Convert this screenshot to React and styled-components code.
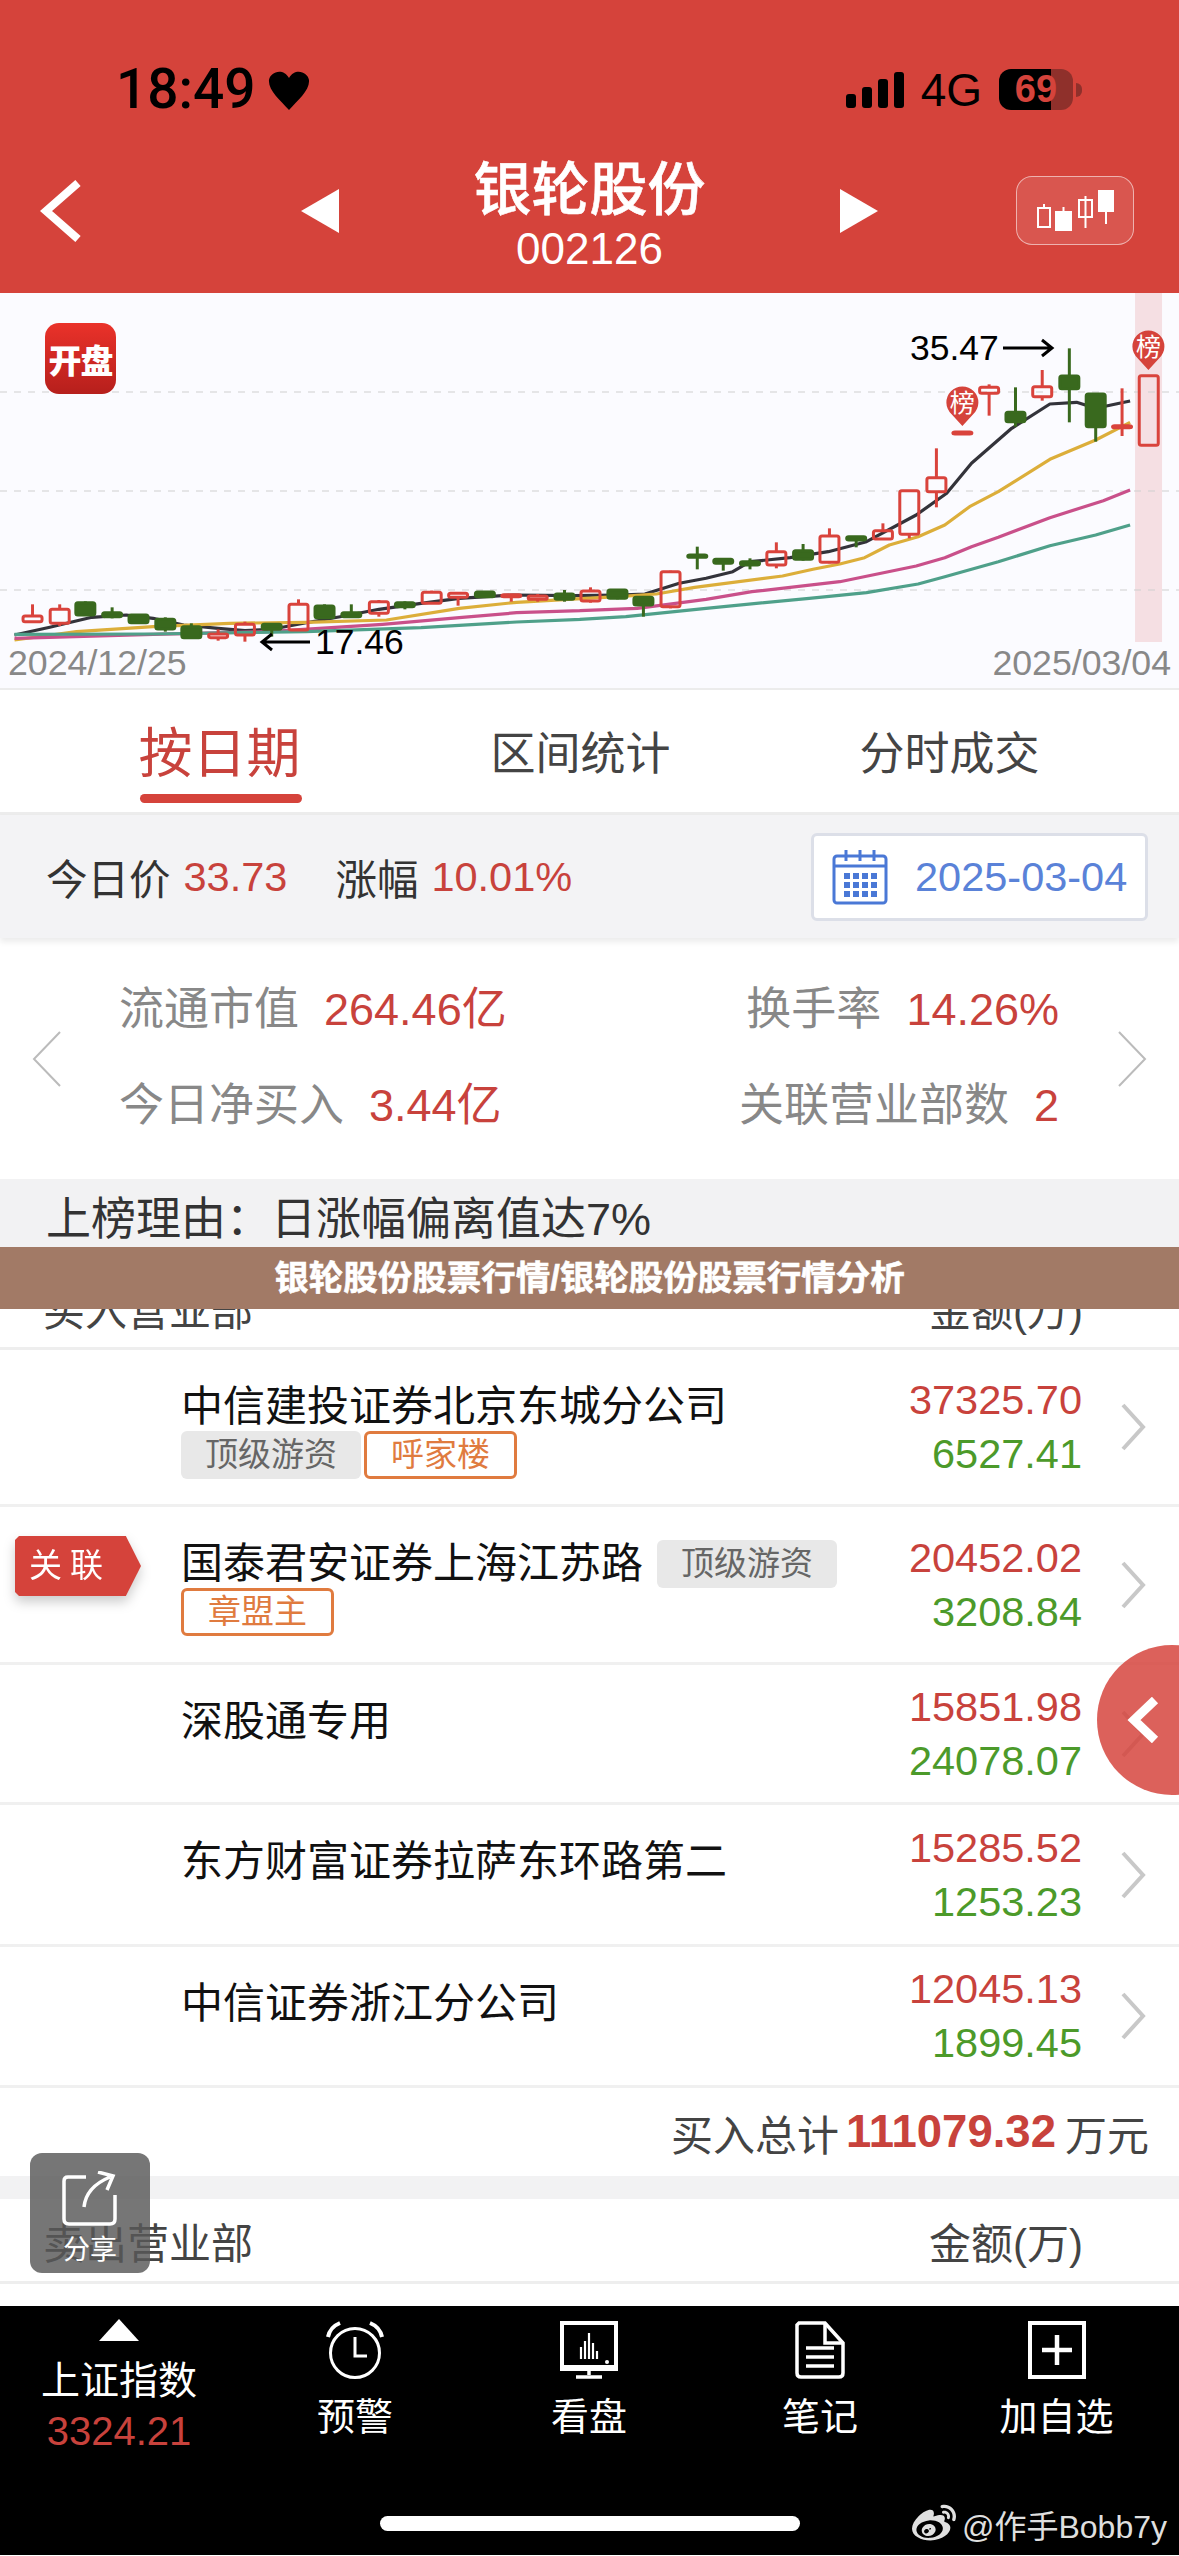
import React from 'react';
import styled, { createGlobalStyle } from 'styled-components';
import { FaWeibo } from 'react-icons/fa';

const RED = '#d5433b';
const NUM_RED = '#c8423c';
const NUM_GREEN = '#4c9a2a';
const CANDLE_RED = '#d9433c';
const CANDLE_GREEN = '#39691e';

const GlobalStyle = createGlobalStyle`
  * { box-sizing: border-box; }
  html, body { margin: 0; padding: 0; background: #fff; }
  body { font-family: "Liberation Sans", "Noto Sans CJK SC", sans-serif; }
`;

const Page = styled.div`
  position: relative;
  display: flex;
  flex-direction: column;
  width: 1179px;
  height: 2556px;
  overflow: hidden;
  background: #fff;
  color: #333;
`;

/* header */
const Header = styled.header`
  display: flex;
  flex-direction: column;
  height: 293px;
  flex: none;
  background: ${RED};
`;

const StatusBar = styled.div`
  display: flex;
  align-items: center;
  height: 55px;
  margin-top: 62px;
  padding: 0 106px 0 116px;
  color: #000;
`;

const Clock = styled.span`
  font-family: Roboto, "Liberation Sans", sans-serif;
  font-weight: 500;
  font-size: 55px;
  line-height: 55px;
`;

const StatusRight = styled.div`
  display: flex;
  align-items: center;
  margin-left: auto;
`;

const Network = styled.span`
  margin: 0 17px 0 17px;
  font-size: 46px;
  line-height: 50px;
`;

const Battery = styled.div`
  display: flex;
  align-items: center;
  justify-content: center;
  width: 74px;
  height: 41px;
  border-radius: 12px;
  background: linear-gradient(90deg, #000 70%, #8f302b 70%);
  color: ${RED};
  font-size: 38px;
  font-weight: 700;
`;

const BatteryTip = styled.div`
  width: 6px;
  height: 14px;
  margin-left: 3px;
  margin-right: -9px;
  border-radius: 0 6px 6px 0;
  background: #8f302b;
`;

const NavRow = styled.div`
  display: grid;
  grid-template-columns: 1fr 578px 1fr;
  align-items: center;
  margin-top: 42px;
  height: 113px;
`;

const BackLink = styled.div`
  padding-left: 40px;
  margin-bottom: 10px;
  line-height: 0;
`;

const StockSwitch = styled.div`
  display: flex;
  align-items: center;
  justify-content: space-between;
`;

const SwitchArrow = styled.svg`
  margin-bottom: 10px;
`;

const StockTitle = styled.div`
  text-align: center;
  color: #fff;
`;

const StockName = styled.div`
  font-size: 58px;
  line-height: 62px;
  font-weight: 500;
  -webkit-text-stroke: 0.6px #fff;
`;

const StockCode = styled.div`
  margin-top: 5px;
  font-size: 44px;
  line-height: 46px;
`;

const KlineButtonWrap = styled.div`
  display: flex;
  justify-content: flex-end;
  padding-right: 45px;
  margin-bottom: 10px;
`;

const KlineButton = styled.div`
  display: flex;
  align-items: center;
  justify-content: center;
  width: 118px;
  height: 69px;
  border: 1.5px solid rgba(255, 255, 255, 0.55);
  border-radius: 16px;
  background: rgba(255, 255, 255, 0.1);
`;

/* chart */
const ChartPanel = styled.section`
  position: relative;
  flex: none;
  height: 397px;
  background: #fbfbff;
  border-bottom: 2px solid #ececec;
`;

const ChartSvg = styled.svg`
  display: block;
  overflow: visible;
`;

const AppLogo = styled.div`
  position: absolute;
  left: 45px;
  top: 30px;
  width: 71px;
  height: 71px;
  display: flex;
  align-items: center;
  justify-content: center;
  border-radius: 14px;
  background: linear-gradient(180deg, #ea322a, #b61f1c);
  color: #fff;
  font-size: 33px;
  font-weight: 900;
  letter-spacing: -1px;
`;

const DateRow = styled.div`
  display: flex;
  justify-content: space-between;
  padding: 0 8px;
  color: #888;
  font-size: 35.7px;
  line-height: 42px;
`;

/* tabs */
const Tabs = styled.nav`
  display: grid;
  grid-template-columns: 365px 357px 381px;
  flex: none;
  height: 125px;
  padding-left: 37px;
  border-bottom: 3px solid #ececec;
`;

const Tab = styled.div`
  position: relative;
  display: flex;
  align-items: center;
  justify-content: center;
  padding-bottom: ${p => (p.$active ? '4px' : '2px')};
  color: ${p => (p.$active ? NUM_RED : '#444')};
  font-size: ${p => (p.$active ? '54px' : '45px')};
`;

const TabLine = styled.span`
  position: absolute;
  left: 50%;
  bottom: 9px;
  width: 162px;
  height: 9px;
  margin-left: -80px;
  border-radius: 5px;
  background: ${RED};
`;

/* today summary */
const Summary = styled.section`
  display: flex;
  align-items: center;
  flex: none;
  height: 123px;
  padding: 0 31px 0 46px;
  background: #f3f3f5;
  box-shadow: 0 4px 6px rgba(0, 0, 0, 0.08);
  font-size: 41.5px;
  color: #333;
`;

const SummaryValue = styled.span`
  margin-left: 13px;
  margin-right: 48px;
  color: ${NUM_RED};
`;

const DateBox = styled.div`
  display: flex;
  align-items: center;
  gap: 27px;
  width: 337px;
  height: 88px;
  margin-left: auto;
  padding-left: 18px;
  border: 3px solid #dcdfe8;
  border-radius: 6px;
  background: #fff;
  color: #5a82d8;
`;

/* metrics */
const Metrics = styled.section`
  display: grid;
  grid-template-columns: 30px 1fr 30px;
  align-items: center;
  flex: none;
  height: 241px;
  padding: 0 32px;
`;

const MetricsBody = styled.div`
  display: flex;
  flex-direction: column;
  gap: 36px;
  padding: 0 58px 0 57px;
  margin-top: -2px;
`;

const MetricsRow = styled.div`
  display: flex;
  justify-content: space-between;
  font-size: 45px;
  line-height: 60px;
  color: #888;
`;

const MetricValue = styled.span`
  margin-left: 25px;
  color: ${NUM_RED};
`;

/* list */
const Reason = styled.div`
  flex: none;
  height: 84px;
  padding: 14px 0 0 46px;
  background: #f2f2f3;
  color: #333;
  font-size: 45px;
  line-height: 54px;
`;

const ListHead = styled.div`
  display: flex;
  justify-content: space-between;
  align-items: center;
  flex: none;
  height: ${p => (p.$raised ? '87px' : '85px')};
  padding: ${p => (p.$raised ? '4px' : '0')} 96px 0 43px;
  border-bottom: 3px solid #eeeeee;
  color: #444;
  font-size: 42px;
`;

const Row = styled.div`
  position: relative;
  display: flex;
  flex: none;
  height: ${p => p.$h}px;
  padding: 33px 33px 0 181px;
  border-bottom: 3px solid #f0f0f0;
`;

const NameCol = styled.div`
  display: flex;
  flex-wrap: wrap;
  align-items: center;
  align-content: flex-start;
  width: 710px;
`;

const Name = styled.span`
  margin-right: 14px;
  color: #111;
  font-size: 42px;
  line-height: 48px;
`;

const Tag = styled.span`
  height: 48px;
  margin-right: 3px;
  padding: 0 24px;
  border: ${p => (p.$orange ? '3px solid #e07b3f' : 'none')};
  border-radius: 6px;
  background: ${p => (p.$orange ? '#fff' : '#e8e8e8')};
  color: ${p => (p.$orange ? '#e07b3f' : '#666')};
  font-size: 33px;
  line-height: ${p => (p.$orange ? '42px' : '48px')};
`;

const Amounts = styled.div`
  display: flex;
  flex-direction: column;
  align-self: center;
  margin: -33px 38px 0 auto;
  text-align: right;
  font-size: 41.5px;
  line-height: 54px;
`;

const Amount = styled.span`
  color: ${p => (p.$down ? NUM_GREEN : NUM_RED)};
`;

const RowArrow = styled.svg`
  align-self: center;
  flex: none;
  margin-top: -33px;
`;

const BadgeShadow = styled.div`
  position: absolute;
  left: 15px;
  top: 29px;
  filter: drop-shadow(0 6px 6px rgba(0, 0, 0, 0.2));
`;

const Badge = styled.div`
  width: 126px;
  height: 60px;
  padding-left: 14px;
  background: ${RED};
  clip-path: polygon(0 4px, 4px 0, 88% 0, 100% 50%, 88% 100%, 4px 100%, 0 calc(100% - 4px));
  color: #fff;
  font-size: 33px;
  line-height: 60px;
  letter-spacing: 8px;
`;

const Total = styled.div`
  display: flex;
  align-items: center;
  justify-content: flex-end;
  flex: none;
  height: 88px;
  padding-right: 30px;
  color: #444;
  font-size: 42px;
`;

const TotalValue = styled.span`
  margin: 0 9px 0 7px;
  color: ${NUM_RED};
  font-weight: 700;
  font-size: 45.5px;
`;

const GapBand = styled.div`
  flex: none;
  height: 23px;
  background: #f2f2f3;
`;

/* floating */
const Banner = styled.div`
  position: absolute;
  left: 0;
  right: 0;
  top: 1247px;
  height: 62px;
  background: #a27a66;
  color: #fff;
  text-align: center;
  font-size: 34.5px;
  font-weight: 700;
  line-height: 62px;
  -webkit-text-stroke: 0.6px #fff;
`;

const SideToggle = styled.div`
  position: absolute;
  left: 1097px;
  top: 1645px;
  display: flex;
  align-items: center;
  width: 150px;
  height: 150px;
  padding-left: 30px;
  border-radius: 50%;
  background: rgba(213, 67, 59, 0.84);
`;

const ShareButton = styled.div`
  position: absolute;
  left: 30px;
  top: 2153px;
  display: flex;
  flex-direction: column;
  align-items: center;
  gap: 8px;
  width: 120px;
  height: 120px;
  padding-top: 18px;
  border-radius: 12px;
  background: rgba(88, 88, 88, 0.82);
  color: #fff;
  font-size: 27px;
  line-height: 30px;
`;

/* bottom bar */
const BottomBar = styled.footer`
  display: flex;
  flex-direction: column;
  flex: none;
  margin-top: 22px;
  height: 249px;
  background: #000;
  color: #fff;
`;

const BarGrid = styled.div`
  display: grid;
  grid-template-columns: 238px 234px 234px 228px 245px;
  padding-top: 13px;
`;

const BarItem = styled.div`
  display: flex;
  flex-direction: column;
  align-items: center;
  font-size: 38px;
  line-height: 44px;
`;

const BarIcon = styled.svg`
  margin-top: 2px;
  margin-bottom: 16px;
`;

const IndexName = styled.span`
  margin-top: 18px;
  font-size: 39px;
`;

const IndexValue = styled.span`
  margin-top: 6px;
  color: ${NUM_RED};
  font-size: 40px;
`;

const HomeBar = styled.div`
  align-self: center;
  width: 420px;
  height: 15px;
  margin-top: auto;
  margin-bottom: 24px;
  border-radius: 8px;
  background: #fff;
`;

const Watermark = styled.div`
  position: absolute;
  right: 12px;
  bottom: 9px;
  display: flex;
  align-items: center;
  gap: 6px;
  color: rgba(255, 255, 255, 0.88);
  font-size: 32px;
`;

/* chart data, measured in page pixels once converted */
const lx = px => px * 0.3827;
const rx = px => 580 + px * 0.382;
const py = v => 290 + v / 3;

const R = CANDLE_RED;
const G = CANDLE_GREEN;

const candles = [
  ...[
    [85, 978, 995, 943, 995, R], [156, 958, 1000, 943, 1008, R], [223, 938, 975, 934, 978, G],
    [293, 968, 980, 952, 985, G], [362, 975, 998, 973, 1000, G], [432, 988, 1017, 982, 1025, G],
    [500, 1010, 1043, 1000, 1045, G], [570, 1032, 1043, 1018, 1052, R], [640, 1003, 1035, 995, 1055, R],
    [710, 1003, 1018, 1000, 1040, G], [780, 943, 1020, 928, 1022, R], [848, 948, 983, 943, 985, G],
    [918, 968, 980, 943, 983, G], [990, 935, 970, 930, 980, R], [1058, 938, 950, 934, 958, G],
    [1128, 907, 940, 902, 942, R], [1197, 910, 922, 908, 947, R], [1267, 906, 920, 903, 922, G],
    [1336, 914, 920, 912, 935, R], [1405, 918, 928, 912, 935, R], [1475, 912, 928, 900, 935, G],
    [1543, 903, 933, 892, 938, R],
  ].map(c => [lx(c[0]), ...c.slice(1)]),
  ...[
    [98, 900, 925, 898, 928, G], [166, 922, 945, 920, 980, G], [237, 845, 950, 842, 955, R],
    [307, 795, 802, 770, 838, G], [375, 808, 820, 806, 842, G], [445, 815, 825, 805, 838, G],
    [514, 785, 825, 757, 835, R], [584, 782, 808, 762, 812, G], [653, 738, 817, 715, 820, R],
    [723, 740, 750, 738, 772, G], [793, 722, 747, 700, 750, R], [862, 602, 733, 600, 745, R],
    [933, 563, 605, 475, 652, R], [1001, 426, 432, 426, 432, R], [1071, 292, 310, 283, 377, R],
    [1140, 367, 395, 292, 410, G], [1210, 290, 320, 240, 332, R], [1281, 258, 296, 175, 397, G],
    [1350, 312, 410, 312, 455, G], [1419, 407, 413, 295, 438, R],
  ].map(c => [rx(c[0]), ...c.slice(1)]),
];

const toPath = (left, right) =>
  'M' +
  [
    ...left.map(([x, y]) => `${lx(x).toFixed(1)} ${py(y).toFixed(1)}`),
    ...right.map(([x, y]) => `${rx(x).toFixed(1)} ${py(y).toFixed(1)}`),
  ].join(' L');

const maLines = [
  {
    color: '#33333a',
    d: toPath(
      [[38, 1035], [130, 1012], [240, 982], [330, 975], [400, 985], [480, 1005], [570, 1015], [640, 1022], [710, 1018], [800, 998], [900, 978], [990, 958], [1100, 940], [1200, 925], [1340, 915], [1500, 917]],
      [[100, 915], [170, 912], [260, 880], [330, 865], [400, 845], [445, 815], [550, 803], [650, 785], [750, 755], [880, 675], [960, 610], [1025, 520], [1130, 415], [1230, 342], [1300, 337], [1350, 355], [1440, 333]]
    ),
  },
  {
    color: '#dcae3a',
    d: toPath(
      [[38, 1050], [200, 1025], [400, 1010], [600, 1000], [800, 997], [1010, 990], [1200, 955], [1350, 937], [1530, 925]],
      [[100, 920], [200, 912], [300, 892], [530, 858], [610, 838], [680, 822], [745, 803], [810, 765], [885, 740], [955, 705], [1020, 650], [1095, 605], [1230, 508], [1350, 450], [1440, 397]]
    ),
  },
  {
    color: '#c9508a',
    d: toPath(
      [[38, 1045], [400, 1033], [700, 1025], [1000, 1003], [1200, 983], [1350, 968], [1518, 962]],
      [[0, 962], [150, 955], [330, 928], [450, 905], [680, 875], [880, 828], [955, 803], [1025, 770], [1095, 742], [1230, 683], [1370, 632], [1440, 600]]
    ),
  },
  {
    color: '#4fa08a',
    d: toPath(
      [[38, 1033], [400, 1032], [800, 1025], [1100, 1013], [1350, 996], [1518, 988]],
      [[0, 988], [120, 980], [330, 955], [600, 925], [750, 908], [885, 882], [955, 860], [1095, 815], [1230, 767], [1350, 735], [1440, 705]]
    ),
  },
];

const Pin = ({ x, y }) => (
  <g>
    <path d={`M${x} ${y} L${x - 11} ${y - 12} A16 16 0 1 1 ${x + 11} ${y - 12} Z`} fill={RED} />
    <text x={x} y={y - 14} textAnchor="middle" fontSize="25" fill="#fff">榜</text>
  </g>
);

const Chart = () => (
  <ChartSvg width="1179" height="349" viewBox="0 293 1179 349">
    <rect x={rx(1453)} y="293" width="27" height="349" fill="#f5dfe3" />
    {[392, 491, 590].map(y => (
      <line key={y} x1="0" x2="1179" y1={y} y2={y} stroke="#cfcfcf" strokeWidth="1" strokeDasharray="7 7" />
    ))}
    {maLines.map(l => (
      <path key={l.color} d={l.d} fill="none" stroke={l.color} strokeWidth="3.2" strokeLinejoin="round" />
    ))}
    {candles.map(([x, bt, bb, wt, wb, color]) => (
      <g key={x} stroke={color}>
        <line x1={x} x2={x} y1={py(wt)} y2={py(bt)} strokeWidth="3" />
        <line x1={x} x2={x} y1={py(bb)} y2={py(wb)} strokeWidth="3" />
        <rect
          x={x - 9.5}
          y={py(bt)}
          width="19"
          height={py(bb) - py(bt)}
          rx="2"
          strokeWidth="3"
          fill={color === G ? G : 'none'}
        />
      </g>
    ))}
    <rect x={rx(1464)} y={py(257)} width="19" height={py(466) - py(257)} rx="2" fill="none" stroke={R} strokeWidth="3" />
    <Pin x={rx(1001)} y={py(408)} />
    <Pin x={rx(1488)} y={py(240)} />
    <text x="910" y="360" fontSize="35.5" fontFamily="Liberation Sans" fill="#000">35.47</text>
    <path d="M1003 348 H1051 M1042 340 L1052 348 L1042 356" fill="none" stroke="#000" strokeWidth="3" />
    <text x="315" y="654" fontSize="35.5" fontFamily="Liberation Sans" fill="#000">17.46</text>
    <path d="M310 642 H262 M272 634 L262 642 L272 650" fill="none" stroke="#000" strokeWidth="3" />
  </ChartSvg>
);

const SignalBars = () => (
  <svg width="58" height="36" viewBox="0 0 58 36" fill="#000">
    <rect x="0" y="22" width="10" height="14" rx="3" />
    <rect x="16" y="15" width="10" height="21" rx="3" />
    <rect x="32" y="7" width="10" height="29" rx="3" />
    <rect x="48" y="0" width="10" height="36" rx="3" />
  </svg>
);

const Heart = () => (
  <svg width="42" height="40" viewBox="0 0 42 40" style={{ marginLeft: 12 }}>
    <path d="M21 40 C12 30 0 20 1 10 C2 2 15 -3 21 8 C27 -3 40 2 41 10 C42 20 30 30 21 40 Z" fill="#000" />
  </svg>
);

const KlineIcon = () => (
  <svg width="80" height="42" viewBox="0 0 80 42" fill="none" stroke="#fff" strokeWidth="2">
    <rect x="3" y="18" width="12" height="19" />
    <line x1="9" y1="14" x2="9" y2="18" />
    <rect x="21" y="22" width="15" height="18" fill="#fff" />
    <line x1="28.5" y1="17" x2="28.5" y2="22" />
    <rect x="44" y="10" width="13" height="17" />
    <line x1="50.5" y1="6" x2="50.5" y2="38" />
    <rect x="64" y="1" width="14" height="20" fill="#fff" />
    <line x1="71" y1="21" x2="71" y2="34" />
  </svg>
);

const CalendarIcon = () => (
  <svg width="56" height="56" viewBox="0 0 56 56" fill="none" stroke="#4a78d6" strokeWidth="3">
    <rect x="2" y="7" width="52" height="47" rx="3" />
    <line x1="2" y1="17" x2="54" y2="17" />
    {[14, 28, 42].map(x => <line key={x} x1={x} x2={x} y1="1" y2="12" />)}
    <g fill="#4a78d6" stroke="none">
      {[16, 25, 34, 43].map(x =>
        [24, 33, 42].map(y => <rect key={`${x}${y}`} x={x - 4} y={y} width="6" height="6" />)
      )}
    </g>
  </svg>
);

const Chevron = ({ flip }) => (
  <svg width="30" height="56" viewBox="0 0 30 56" fill="none" stroke="#bbb" strokeWidth="2">
    <path d={flip ? 'M2 1 L28 28 L2 55' : 'M28 1 L2 28 L28 55'} />
  </svg>
);

const ShareIcon = () => (
  <svg width="56" height="56" viewBox="0 0 56 56" fill="none" stroke="#fff" strokeWidth="3.5">
    <path d="M24 6 H6 Q2 6 2 10 V48 Q2 53 7 53 H48 Q53 53 53 48 V24" />
    <path d="M22 36 Q24 16 48 6 M36 1 L51 5 L45 19" />
  </svg>
);

const AlarmIcon = () => (
  <BarIcon width="58" height="58" viewBox="0 0 58 58" fill="none" stroke="#fff" strokeWidth="3">
    <circle cx="29" cy="32" r="24.5" />
    <path d="M29 16 V35 H41" />
    <path d="M2 16 Q4 6 14 2 M56 16 Q54 6 44 2" strokeWidth="4" />
  </BarIcon>
);

const MonitorIcon = () => (
  <BarIcon width="58" height="58" viewBox="0 0 58 58" fill="none">
    <rect x="2" y="2" width="54" height="46" fill="#000" stroke="#fff" strokeWidth="4" />
    <rect x="0" y="44" width="58" height="5" fill="#fff" />
    <path d="M29 49 V54 M16 56 H42" stroke="#fff" strokeWidth="3.5" />
    <g stroke="#fff" strokeWidth="2.2">
      <path d="M21 38 V26 M25 38 V20 M29 38 V12 M33 38 V22 M37 38 V30" />
    </g>
    <circle cx="47" cy="41" r="2" fill="#fff" />
  </BarIcon>
);

const DocIcon = () => (
  <BarIcon width="50" height="58" viewBox="0 0 50 58" fill="none" stroke="#fff" strokeWidth="3.5">
    <path d="M4 2 H30 L48 22 V52 Q48 56 44 56 H6 Q2 56 2 52 V4 Z" />
    <path d="M30 2 V22 H48" />
    <path d="M11 27 H39 M11 36 H39 M11 45 H39" />
  </BarIcon>
);

const PlusIcon = () => (
  <BarIcon width="58" height="58" viewBox="0 0 58 58" fill="none" stroke="#fff">
    <rect x="2" y="2" width="54" height="54" strokeWidth="4" />
    <path d="M29 14 V44 M14 29 H44" strokeWidth="4.5" />
  </BarIcon>
);

const rows = [
  { h: 157, name: '中信建投证券北京东城分公司', tags: [['顶级游资'], ['呼家楼', true]], buy: '37325.70', sell: '6527.41' },
  { h: 158, name: '国泰君安证券上海江苏路', tags: [['顶级游资'], ['章盟主', true]], buy: '20452.02', sell: '3208.84', linked: true },
  { h: 140, name: '深股通专用', tags: [], buy: '15851.98', sell: '24078.07' },
  { h: 142, name: '东方财富证券拉萨东环路第二', tags: [], buy: '15285.52', sell: '1253.23' },
  { h: 141, name: '中信证券浙江分公司', tags: [], buy: '12045.13', sell: '1899.45' },
];

const App = () => (
  <Page>
    <GlobalStyle />
    <Header>
      <StatusBar>
        <Clock>18:49</Clock>
        <Heart />
        <StatusRight>
          <SignalBars />
          <Network>4G</Network>
          <Battery>69</Battery>
          <BatteryTip />
        </StatusRight>
      </StatusBar>
      <NavRow>
        <BackLink>
          <svg width="42" height="62" viewBox="0 0 42 62" fill="none" stroke="#fff" strokeWidth="8">
            <path d="M38 3 L6 31 L38 59" />
          </svg>
        </BackLink>
        <StockSwitch>
          <SwitchArrow width="38" height="44" viewBox="0 0 38 44">
            <path d="M38 0 V44 L0 22 Z" fill="#fff" />
          </SwitchArrow>
          <StockTitle>
            <StockName>银轮股份</StockName>
            <StockCode>002126</StockCode>
          </StockTitle>
          <SwitchArrow width="38" height="44" viewBox="0 0 38 44">
            <path d="M0 0 V44 L38 22 Z" fill="#fff" />
          </SwitchArrow>
        </StockSwitch>
        <KlineButtonWrap>
          <KlineButton>
            <KlineIcon />
          </KlineButton>
        </KlineButtonWrap>
      </NavRow>
    </Header>

    <ChartPanel>
      <Chart />
      <AppLogo>开盘</AppLogo>
      <DateRow>
        <span>2024/12/25</span>
        <span>2025/03/04</span>
      </DateRow>
    </ChartPanel>

    <Tabs>
      <Tab $active>
        按日期
        <TabLine />
      </Tab>
      <Tab>区间统计</Tab>
      <Tab>分时成交</Tab>
    </Tabs>

    <Summary>
      今日价<SummaryValue>33.73</SummaryValue>
      涨幅<SummaryValue>10.01%</SummaryValue>
      <DateBox>
        <CalendarIcon />
        2025-03-04
      </DateBox>
    </Summary>

    <Metrics>
      <Chevron />
      <MetricsBody>
        <MetricsRow>
          <span>流通市值<MetricValue>264.46亿</MetricValue></span>
          <span>换手率<MetricValue>14.26%</MetricValue></span>
        </MetricsRow>
        <MetricsRow>
          <span>今日净买入<MetricValue>3.44亿</MetricValue></span>
          <span>关联营业部数<MetricValue>2</MetricValue></span>
        </MetricsRow>
      </MetricsBody>
      <Chevron flip />
    </Metrics>

    <Reason>上榜理由：日涨幅偏离值达7%</Reason>
    <ListHead $raised>
      <span>买入营业部</span>
      <span>金额(万)</span>
    </ListHead>

    {rows.map(r => (
      <Row key={r.name} $h={r.h}>
        {r.linked && (
          <BadgeShadow>
            <Badge>关联</Badge>
          </BadgeShadow>
        )}
        <NameCol>
          <Name>{r.name}</Name>
          {r.tags.map(([label, orange]) => (
            <Tag key={label} $orange={orange}>{label}</Tag>
          ))}
        </NameCol>
        <Amounts>
          <Amount>{r.buy}</Amount>
          <Amount $down>{r.sell}</Amount>
        </Amounts>
        <RowArrow width="26" height="48" viewBox="0 0 26 48" fill="none" stroke="#c8c8c8" strokeWidth="4">
          <path d="M3 2 L23 24 L3 46" />
        </RowArrow>
      </Row>
    ))}

    <Total>
      买入总计<TotalValue>111079.32</TotalValue>万元
    </Total>
    <GapBand />
    <ListHead>
      <span>卖出营业部</span>
      <span>金额(万)</span>
    </ListHead>

    <BottomBar>
      <BarGrid>
        <BarItem>
          <svg width="40" height="22" viewBox="0 0 40 22">
            <path d="M20 0 L40 22 H0 Z" fill="#fff" />
          </svg>
          <IndexName>上证指数</IndexName>
          <IndexValue>3324.21</IndexValue>
        </BarItem>
        <BarItem>
          <AlarmIcon />
          预警
        </BarItem>
        <BarItem>
          <MonitorIcon />
          看盘
        </BarItem>
        <BarItem>
          <DocIcon />
          笔记
        </BarItem>
        <BarItem>
          <PlusIcon />
          加自选
        </BarItem>
      </BarGrid>
      <HomeBar />
    </BottomBar>

    <Banner>银轮股份股票行情/银轮股份股票行情分析</Banner>
    <SideToggle>
      <svg width="32" height="46" viewBox="0 0 32 46" fill="none" stroke="#fff" strokeWidth="9">
        <path d="M28 3 L7 23 L28 43" />
      </svg>
    </SideToggle>
    <ShareButton>
      <ShareIcon />
      <span>分享</span>
    </ShareButton>
    <Watermark>
      <FaWeibo size={44} />
      @作手Bobb7y
    </Watermark>
  </Page>
);

export default App;
